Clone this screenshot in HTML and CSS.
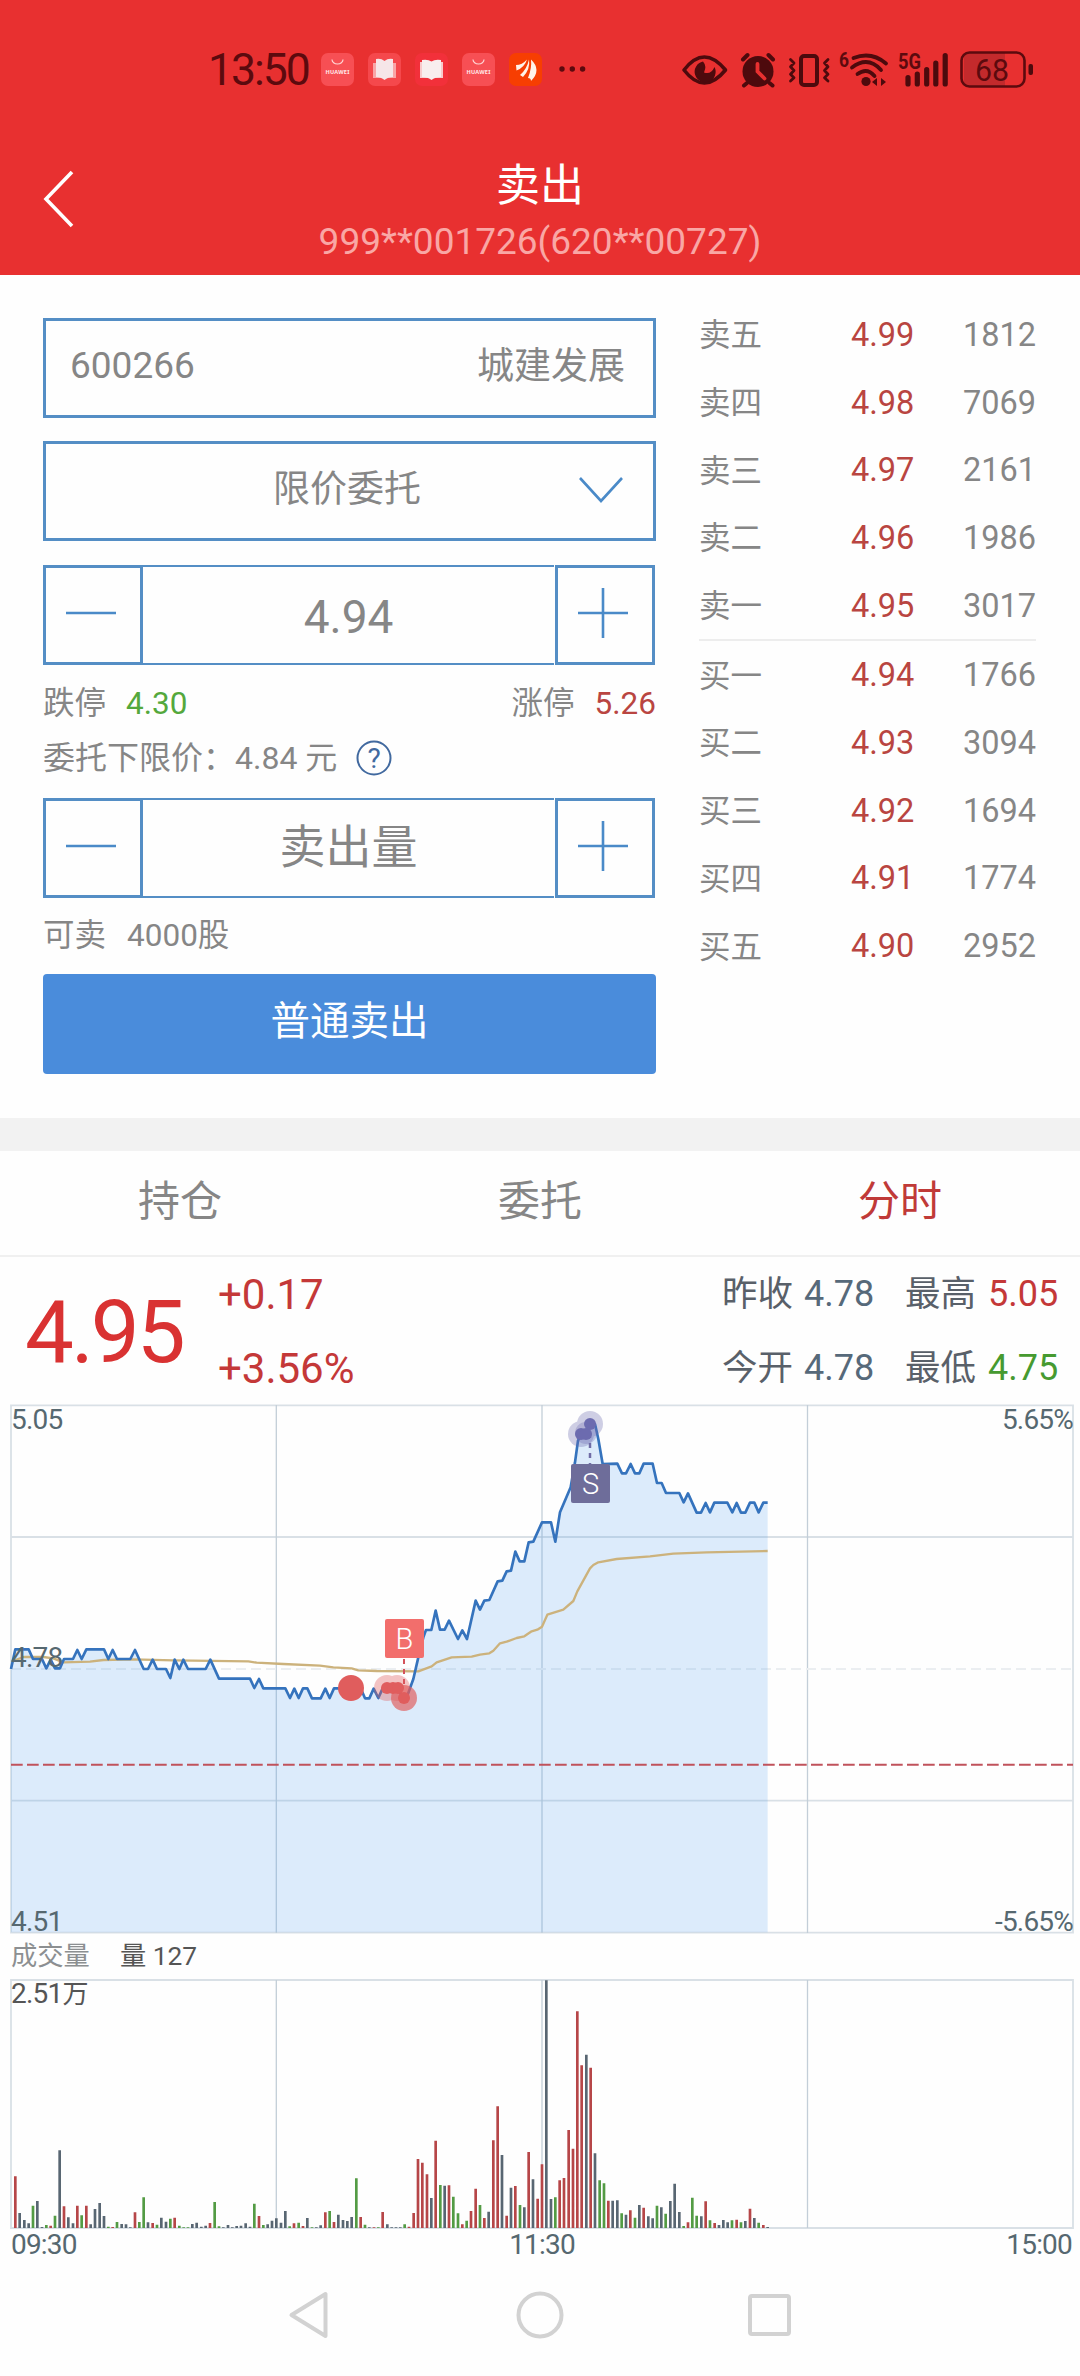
FILE: index.html
```html
<!DOCTYPE html>
<html lang="zh-CN">
<head>
<meta charset="utf-8">
<title>卖出</title>
<link rel="stylesheet" href="styles.css">
</head>
<body>
<header class="header">
  <div class="status">
    <div class="status-left">
      <span class="clock">13:50</span>
      <div class="apps">
        <svg class="app" viewBox="0 0 33 33"><rect width="33" height="33" rx="7" fill="#f74f54"/><path d="M11 6.500a5.500 4.500 0 0 0 11 0" fill="none" stroke="#ffd5d5" stroke-width="1.200"/><text x="16.500" y="21" class="app-name">HUAWEI</text></svg>
        <svg class="app" viewBox="0 0 33 33"><rect width="33" height="33" rx="7" fill="#f5484c"/><path d="M5 10h23v15H5z" fill="#f9a5a7"/><path d="M8 6q5-1 8.500 2Q20 5 25 6v18q-5 0-8.500 3Q13 24 8 24z" fill="#f6e6e8"/></svg>
        <svg class="app" viewBox="0 0 33 33"><rect width="33" height="33" rx="7" fill="#f2303a"/><path d="M5 9h23v16H5z" fill="#f9c9cb"/><path d="M7 7q6-1 9.500 1.500Q20 6 26 7v17q-6 0-9.500 3Q13 24 7 24z" fill="#f8eeee"/></svg>
        <svg class="app" viewBox="0 0 33 33"><rect width="33" height="33" rx="7" fill="#f74f54"/><path d="M11 6.500a5.500 4.500 0 0 0 11 0" fill="none" stroke="#ffd5d5" stroke-width="1.200"/><text x="16.500" y="21" class="app-name">HUAWEI</text></svg>
        <svg class="app" viewBox="0 0 33 33"><rect width="33" height="33" rx="7" fill="#f73e02"/><path d="M7 12Q13 12 18 6.500Q15.500 14.500 7.500 17.500zM11 22Q18 16 20 6.500Q21.500 16 14 24zM19 25Q23 15 22 6.500Q33 17 22 28Q22 25 19 25z" fill="#fff3e8"/></svg>
      </div>
      <svg class="more" viewBox="0 0 28 8"><g fill="#5c0a0e"><circle cx="3" cy="4" r="2.700"/><circle cx="13.300" cy="4" r="2.700"/><circle cx="23.600" cy="4" r="2.700"/></g></svg>
    </div>
    <svg class="status-right" viewBox="680 44 356 48">
      <g fill="none" stroke="#4d0a0d" stroke-width="3.600" stroke-linecap="round" stroke-linejoin="round">
        <path d="M684 69Q704 43 725.500 69Q704 95 684 69z"/>
        <path d="M743 58.500l4.500-4.500M773 58.500l-4.500-4.500M747 82l-3 2.500M769.500 82l3 2.500" stroke-width="4"/>
        <rect x="801" y="55" width="16" height="29" rx="3" stroke-width="4"/>
        <path d="M790.500 58.500l3.500 3.500-3.500 3.700 3.500 3.800-3.500 3.700 3.500 3.500-3.500 3.300M828 58.500l-3.500 3.500 3.500 3.700-3.500 3.800 3.500 3.700-3.500 3.500 3.500 3.300" stroke-width="2.800"/>
        <path d="M853.500 57q18-7 32.500 5.500M852 66.500q16-12 29 2.500M857.500 73q9.500-7 17 2" stroke-width="3.800"/>
        <path d="M908 76.500v6.500M917.300 73v10M926.700 68.500v14.500M935.800 62v21M945.200 54.500v28.500" stroke-width="5.200"/>
      </g>
      <path d="M703 60.500A10.500 10.500 0 1 0 714.500 66Q711 74 704 71.500Q707 65 703 60.500z" fill="#4d0a0d"/>
      <circle cx="758" cy="70.500" r="15.500" fill="#4d0a0d"/>
      <path d="M757.500 63v7.500l7 7" fill="none" stroke="#e83030" stroke-width="3.800" stroke-linecap="round"/>
      <circle cx="866" cy="80.500" r="4.600" fill="#4d0a0d"/>
      <path d="M872 81l5-4v8zM886 81l-5-4v8z" fill="#4d0a0d"/>
      <path d="M964 52h41v33h-41z" fill="#c32a2c"/>
      <rect x="961.500" y="51.500" width="63" height="34" rx="8" fill="none" stroke="#5c0a0e" stroke-width="2.600"/>
      <rect x="1028.500" y="63" width="4.500" height="11" rx="2" fill="#4d0a0d"/>
      <text x="839" y="66" class="sig" font-size="21" textLength="10" lengthAdjust="spacingAndGlyphs">6</text>
      <text x="898" y="68" class="sig" font-size="22" textLength="23" lengthAdjust="spacingAndGlyphs">5G</text>
      <text x="975" y="80" class="sig-thin" font-size="32" textLength="34" lengthAdjust="spacingAndGlyphs">68</text>
    </svg>
  </div>
  <div class="titlebar">
    <svg class="back" viewBox="0 0 34 60"><path d="M31 3L5 30l26 27" fill="none" stroke="#fff" stroke-width="3.600"/></svg>
    <div class="titles">
      <h1 class="title">卖出</h1>
      <p class="account">999**001726(620**00727)</p>
    </div>
  </div>
</header>

<main>
  <section class="trade">
    <div class="form">
      <div class="field stock"><span>600266</span><span class="raised">城建发展</span></div>
      <div class="field order-type"><span class="raised">限价委托</span><svg class="chevron" viewBox="0 0 46 28"><path d="M2 2l21 23L44 2" fill="none" stroke="#4a8ac8" stroke-width="2.600"/></svg></div>
      <div class="stepper">
        <span class="step"><svg viewBox="0 0 50 50"><path d="M0 25h50"/></svg></span>
        <span class="value price">4.94</span>
        <span class="step"><svg viewBox="0 0 50 50"><path d="M0 25h50M25 0v50"/></svg></span>
      </div>
      <div class="limits"><span>跌停<b class="green">4.30</b></span><span>涨停<b class="red">5.26</b></span></div>
      <div class="floor"><span class="floor-name">委托下限价：</span><span class="floor-price">4.84 元</span><svg class="help" viewBox="0 0 36 36"><circle cx="18" cy="18" r="16.500" fill="none" stroke="#41699f" stroke-width="2"/><text x="18" y="28" text-anchor="middle">?</text></svg></div>
      <div class="stepper">
        <span class="step"><svg viewBox="0 0 50 50"><path d="M0 25h50"/></svg></span>
        <span class="value">卖出量</span>
        <span class="step"><svg viewBox="0 0 50 50"><path d="M0 25h50M25 0v50"/></svg></span>
      </div>
      <div class="available"><span>可卖</span><span>4000股</span></div>
      <div class="submit">普通卖出</div>
    </div>
    <div class="book">
      <div class="level"><span>卖五</span><span class="red">4.99</span><span class="qty">1812</span></div>
      <div class="level"><span>卖四</span><span class="red">4.98</span><span class="qty">7069</span></div>
      <div class="level"><span>卖三</span><span class="red">4.97</span><span class="qty">2161</span></div>
      <div class="level"><span>卖二</span><span class="red">4.96</span><span class="qty">1986</span></div>
      <div class="level"><span>卖一</span><span class="red">4.95</span><span class="qty">3017</span></div>
      <div class="book-line"></div>
      <div class="level"><span>买一</span><span class="red">4.94</span><span class="qty">1766</span></div>
      <div class="level"><span>买二</span><span class="red">4.93</span><span class="qty">3094</span></div>
      <div class="level"><span>买三</span><span class="red">4.92</span><span class="qty">1694</span></div>
      <div class="level"><span>买四</span><span class="red">4.91</span><span class="qty">1774</span></div>
      <div class="level"><span>买五</span><span class="red">4.90</span><span class="qty">2952</span></div>
    </div>
  </section>

  <nav class="tabs"><span>持仓</span><span>委托</span><span class="active">分时</span></nav>

  <section class="quote">
    <strong class="last">4.95</strong>
    <div class="change"><span>+0.17</span><span>+3.56%</span></div>
    <div class="stats">
      <span>昨收</span><span class="num">4.78</span><span class="second">最高</span><span class="num up">5.05</span>
      <span>今开</span><span class="num">4.78</span><span class="second">最低</span><span class="num down">4.75</span>
    </div>
  </section>

  <svg class="price-chart" viewBox="0 1404 1080 532">
    <g fill="none" stroke="#d9e0e6" stroke-width="1.800">
      <path d="M11 1406.300H1073V1933.700H11zM11 1538H1073M11 1801.700H1073"/>
      <path d="M276.300 1406V1934M542 1406V1934M807.500 1406V1934" stroke="#c3ced8" stroke-width="1.300"/>
      <path d="M11 1670H1073" stroke="#ebeef1" stroke-dasharray="10 5"/>
    </g>
    <g transform="translate(0 1600) scale(.33333)" fill="none" stroke-linejoin="round">
      <path fill="#4a98ee" fill-opacity=".19" d="M33 1000V210L46 151H86L99 180H126L139 208 152 182 165 208H180L192 180H219L232 153 245 180 259 151H312L325 180 338 153 351 180H391L405 153 431 210H444L458 182 471 210H498L511 237 524 182 538 210 550 182 564 210H617L631 182 657 239H750L763 267 777 240 790 268H856L870 297 883 269 896 297 909 268H922L936 298H962L976 269 989 297 1002 268H1082L1095 298H1108L1121 269 1135 297 1148 268H1190L1212 297 1222 290 1240 240 1255 175 1270 115 1278 93H1294L1307 35 1320 92H1334L1347 65 1374 120 1387 94 1401 120 1427 5 1440 32 1453 5 1468 3 1493-53 1507-55 1520-83 1533-85 1546-142 1559-113H1573L1586-170 1600-172 1626-230H1653L1666-172 1680-260 1712-335 1725-410 1734-475 1745-495H1760L1770-525H1785L1795-480 1808-405 1852-406 1866-377H1878L1892-405 1905-377H1918L1931-406H1958L1971-348H1985L1998-318H2038L2051-290 2064-317 2090-259H2103L2117-288 2130-260 2143-289H2182L2197-260 2210-288 2223-259H2236L2250-289H2263L2276-260 2290-289H2303V1000z"/>
      <path stroke="#ccb27c" stroke-width="7" d="M35 188L70 174H130L160 178 190 190 270 188 310 183 400 181 520 184 745 187 770 191 850 195 960 200 1000 205 1055 208 1075 214 1130 216 1255 217 1295 202 1310 190 1355 175 1415 173 1440 167 1468 163 1480 155 1500 133 1520 128 1550 117 1573 112 1595 97 1612 92 1626 83 1642 47 1690 32 1720 6 1732-23 1770-92 1780-102 1795-110 1850-120 1950-128 2020-136 2120-140 2303-144"/>
      <path stroke="#3573bd" stroke-width="8" d="M33 210L46 151H86L99 180H126L139 208 152 182 165 208H180L192 180H219L232 153 245 180 259 151H312L325 180 338 153 351 180H391L405 153 431 210H444L458 182 471 210H498L511 237 524 182 538 210 550 182 564 210H617L631 182 657 239H750L763 267 777 240 790 268H856L870 297 883 269 896 297 909 268H922L936 298H962L976 269 989 297 1002 268H1082L1095 298H1108L1121 269 1135 297 1148 268H1190L1212 297 1222 290 1240 240 1255 175 1270 115 1278 93H1294L1307 35 1320 92H1334L1347 65 1374 120 1387 94 1401 120 1427 5 1440 32 1453 5 1468 3 1493-53 1507-55 1520-83 1533-85 1546-142 1559-113H1573L1586-170 1600-172 1626-230H1653L1666-172 1680-260 1712-335 1725-410 1734-475 1745-495H1760L1770-525H1785L1795-480 1808-405 1852-406 1866-377H1878L1892-405 1905-377H1918L1931-406H1958L1971-348H1985L1998-318H2038L2051-290 2064-317 2090-259H2103L2117-288 2130-260 2143-289H2182L2197-260 2210-288 2223-259H2236L2250-289H2263L2276-260 2290-289H2303"/>
    </g>
    <path d="M11 1765.700H1073" stroke="#c0525b" stroke-width="2" stroke-dasharray="11.700 4.300"/>
    <path d="M404 1660v30" stroke="#d4525a" stroke-width="2" stroke-dasharray="5 5"/>
    <path d="M590 1434v31" stroke="#6f6ca6" stroke-width="2.500" stroke-dasharray="5 5"/>
    <circle cx="351" cy="1689" r="13" fill="#e05d5d"/>
    <g fill="#e05d5d">
      <g opacity=".36"><circle cx="387" cy="1689" r="13"/><circle cx="397" cy="1689" r="13"/></g>
      <circle cx="404" cy="1699" r="13" opacity=".68"/>
      <circle cx="387" cy="1689" r="6"/><circle cx="393" cy="1689" r="6"/><circle cx="398" cy="1689" r="6"/><circle cx="404" cy="1699" r="6"/>
    </g>
    <g fill="#6c6baf">
      <g opacity=".32"><circle cx="581" cy="1435" r="13"/><circle cx="590" cy="1425" r="13"/></g>
      <circle cx="586" cy="1434" r="11" opacity=".3"/>
      <circle cx="581" cy="1435" r="6"/><circle cx="586" cy="1435" r="6"/><circle cx="590" cy="1425" r="6"/>
    </g>
    <rect x="385" y="1620" width="39" height="39" rx="2" fill="#f26e6c"/>
    <rect x="571" y="1465" width="39" height="39" rx="2" fill="#6e6d9a"/>
    <text x="404.500" y="1650" class="tag">B</text>
    <text x="590.500" y="1495" class="tag">S</text>
    <g class="axis">
      <text x="11" y="1429.500">5.05</text><text x="11" y="1667.500">4.78</text><text x="11" y="1931.500">4.51</text>
      <text x="1073" y="1429.500" text-anchor="end">5.65%</text><text x="1073" y="1931.500" text-anchor="end">-5.65%</text>
    </g>
  </svg>

  <div class="volume-head"><span class="volume-name">成交量</span><span>量 127</span></div>

  <svg class="volume-chart" viewBox="0 1979 1080 281">
    <path d="M11 1981H1073V2229H11z" fill="none" stroke="#d9e0e6" stroke-width="1.800"/>
    <path d="M276.300 1981V2229M542 1981V2229M807.500 1981V2229" stroke="#c3ced8" stroke-width="1.300"/>
    <g transform="translate(0 2229) scale(.33333)" fill="none" stroke-width="8">
      <path stroke="#b64648" d="M46 0v-155M152 0v-7M192 0v-65M232 0v-67M259 0v-67M338 0v-3M405 0v-47M458 0v-15M524 0v-31M630 0v-15M777 0v-36M882 0v-14M909 0v-6M976 0v-47M1002 0v-18M1082 0v-33M1122 0v-2M1148 0v-48M1227 0v-4M1241 0v-45M1254 0v-207M1267 0v-196M1281 0v-161M1307 0v-262M1347 0v-128M1387 0v-11M1413 0v-51M1427 0v-118M1453 0v-30M1480 0v-263M1493 0v-365M1520 0v-37M1546 0v-126M1586 0v-228M1613 0v-88M1626 0v-191M1679 0v-143M1692 0v-150M1706 0v-294M1719 0v-238M1732 0v-650M1745 0v-488M1772 0v-481M1825 0v-82M1891 0v-53M1931 0v-61M2064 0v-17M2117 0v-80M2144 0v-15M2210 0v-25M2250 0v-58M2290 0v-9"/>
      <path stroke="#586672" d="M59 0v-45M73 0v-24M86 0v-14M112 0v-81M126 0v-3M179 0v-233M205 0v-32M219 0v-14M272 0v-11M285 0v-57M299 0v-75M312 0v-36M365 0v-12M378 0v-11M391 0v-2M444 0v-17M484 0v-31M498 0v-19M577 0v-12M590 0v-16M604 0v-4M617 0v-7M670 0v-2M684 0v-9M697 0v-2M710 0v-6M723 0v-7M737 0v-14M750 0v-4M803 0v-11M816 0v-22M829 0v-29M843 0v-16M856 0v-51M922 0v-30M949 0v-2M962 0v-8M1015 0v-40M1029 0v-24M1042 0v-21M1055 0v-33M1108 0v-2M1162 0v-11M1175 0v-2M1188 0v-2M1201 0v-2M1294 0v-90M1334 0v-127M1466 0v-49M1506 0v-219M1533 0v-121M1573 0v-62M1599 0v-146M1639 0v-743M1653 0v-87M1759 0v-520M1785 0v-224M1838 0v-82M1852 0v-83M1878 0v-40M1918 0v-69M1945 0v-35M1958 0v-29M1984 0v-62M2011 0v-81M2024 0v-133M2038 0v-48M2104 0v-35M2157 0v-9M2170 0v-24M2183 0v-17M2236 0v-21M2263 0v-30M2303 0v-3"/>
      <path stroke="#539b44" d="M99 0v-67M139 0v-9M165 0v-37M245 0v-38M325 0v-4M351 0v-18M418 0v-18M431 0v-92M471 0v-10M511 0v-28M538 0v-7M551 0v-2M564 0v-2M644 0v-78M657 0v-5M763 0v-73M790 0v-9M869 0v-5M896 0v-16M936 0v-2M989 0v-51M1069 0v-149M1095 0v-10M1135 0v-2M1214 0v-11M1321 0v-129M1360 0v-94M1374 0v-44M1400 0v-22M1440 0v-69M1560 0v-69M1666 0v-92M1799 0v-143M1812 0v-134M1865 0v-44M1905 0v-31M1971 0v-67M1997 0v-43M2051 0v-6M2077 0v-91M2090 0v-37M2130 0v-23M2196 0v-23M2223 0v-17M2276 0v-16"/>
    </g>
    <g class="axis"><text x="11" y="2004" class="peak">2.51<tspan font-size="26">万</tspan></text><text x="11" y="2255">09:30</text><text x="542" y="2255" text-anchor="middle">11:30</text><text x="1072" y="2255" text-anchor="end">15:00</text></g>
  </svg>
</main>

<footer class="sysnav">
  <svg viewBox="0 0 48 48"><path d="M5.500 24L39.500 3V45z"/></svg>
  <svg viewBox="0 0 48 48"><circle cx="24" cy="24" r="21.500"/></svg>
  <svg viewBox="0 0 48 48"><rect x="4" y="5" width="39" height="38" rx="2"/></svg>
</footer>
</body>
</html>
```
FILE: styles.css
```css
* { box-sizing: border-box; }
body { margin: 0; width: 1080px; height: 2376px; overflow: hidden; background: #fefefe; color: #868686; font-family: Roboto, "Noto Sans CJK SC", sans-serif; font-size: 32px; }
svg { display: block; overflow: visible; }
p, h1 { margin: 0; font-weight: 400; }
b { font-weight: 400; }
.red { color: #b94541; }
.green { color: #54a83c; }

.header { height: 275px; background: #e83030; }
.status { height: 138px; padding: 0 44px 0 208px; display: flex; align-items: center; justify-content: space-between; }
.status-left { display: flex; align-items: center; }
.clock { width: 113px; font-size: 44.500px; line-height: 48px; padding-top: 2px; letter-spacing: -2px; color: #5c0a0e; }
.apps { display: flex; gap: 14px; }
.app { width: 33px; height: 33px; }
.app-name { font: 700 5.600px "Noto Sans", sans-serif; fill: #ffe9e9; text-anchor: middle; letter-spacing: .2px; }
.more { width: 28px; height: 8px; margin-left: 17px; }
.status-right { width: 356px; height: 48px; }
.sig { font-weight: 700; fill: #5c0a0e; }
.sig-thin { fill: #5c0a0e; }
.titlebar { height: 137px; display: grid; grid-template-columns: 41px 34px 1fr 75px; align-items: center; }
.back { grid-column: 2; width: 34px; height: 60px; margin-top: -16px; }
.titles { grid-column: 3; align-self: start; padding-top: 16px; text-align: center; }
.title { font-size: 44px; line-height: 64px; color: #fff; }
.account { margin-top: 4px; font-size: 37px; line-height: 40px; color: #f9a7a5; }

.trade { height: 843px; padding: 0 44px 0 43px; display: flex; justify-content: space-between; }
.form { width: 613px; padding-top: 43px; }
.field { height: 100px; border: 3px solid #548ec5; display: flex; align-items: center; margin-bottom: 23px; font-size: 37px; }
.raised { padding-bottom: 5px; }
.stock { justify-content: space-between; padding: 0 28px 5px 24px; }
.order-type { position: relative; justify-content: center; padding: 0 5px 5px 0; }
.chevron { position: absolute; right: 29px; top: 32px; width: 46px; height: 28px; }
.order-type { margin-bottom: 24px; }
.stepper { height: 100px; width: 612px; display: flex; }
.step { width: 100px; border: 3px solid #548ec5; display: flex; align-items: center; justify-content: center; }
.step svg { width: 50px; height: 50px; margin: -4px 4px 0 0; stroke: #4a8ac8; stroke-width: 2.600; }
.value { flex: 1; border: solid #548ec5; border-width: 2px 0; margin-right: 1px; font-size: 46px; line-height: 95px; text-align: center; }
.price { line-height: 101px; }
.limits { height: 69px; display: flex; justify-content: space-between; align-items: center; font-size: 31.500px; }
.limits b { margin-left: 20px; }
.floor { height: 48px; padding-bottom: 1px; display: flex; align-items: center; }
.floor-name, .floor-price { padding-bottom: 5px; }
.floor-price { width: 121px; }
.help { width: 36px; height: 36px; }
.help text { font-size: 28px; fill: #41699f; }
.floor + .stepper { margin-top: 16px; }
.available { height: 76px; padding-bottom: 9px; display: flex; align-items: center; gap: 21px; font-size: 31.500px; }
.submit { height: 100px; border-radius: 4px; background: #4a8cdb; color: #fff; font-size: 39.500px; line-height: 95px; text-align: center; }

.book { width: 337px; padding-top: 26px; }
.level { height: 67.700px; display: grid; grid-template-columns: 152px 1fr 90px; align-items: center; font-size: 32.500px; }
.level span:first-child { padding-bottom: 5px; font-size: 31.500px; }
.qty { text-align: right; }
.book-line { height: 2px; background: #ededed; }

.tabs { height: 139px; border-top: 33px solid #f2f2f2; border-bottom: 2px solid #f0f0f0; display: grid; grid-template-columns: repeat(3, 1fr); text-align: center; font-size: 42px; line-height: 101px; }
.tabs .active { color: #c03a38; }

.quote { height: 147px; padding: 0 24px 0 25px; display: flex; }
.last { width: 193px; font-weight: 400; font-size: 87px; line-height: 151px; letter-spacing: -3px; color: #d93232; }
.change { flex: 1; display: grid; grid-template-rows: 74px 74px; font-size: 42px; line-height: 75px; color: #c43838; }
.stats { display: grid; grid-template-columns: 82px 101px 83px 68px; grid-template-rows: 74px 74px; font-size: 35.500px; line-height: 74px; color: #596069; }
.num { color: #56697a; font-size: 36px; }
.num.up { color: #c43838; }
.num.down { color: #469a30; }

.price-chart { width: 1080px; height: 532px; margin-top: -1px; }
.axis { font-size: 28px; letter-spacing: -.8px; fill: #566870; }
.axis .peak { fill: #555; }
.tag { font-size: 29px; font-weight: 300; fill: #fff; text-anchor: middle; }
.volume-head { height: 43px; padding-left: 11px; display: flex; align-items: center; gap: 30px; font-size: 26.300px; line-height: 43px; color: #555; }
.volume-name { color: #8c8f91; }
.volume-chart { width: 1080px; height: 281px; }
.sysnav { height: 112px; display: flex; justify-content: center; gap: 182px; }
.sysnav svg { width: 48px; height: 48px; margin-top: 32px; fill: none; stroke: #d2d2d2; stroke-width: 4; stroke-linejoin: round; }
```
